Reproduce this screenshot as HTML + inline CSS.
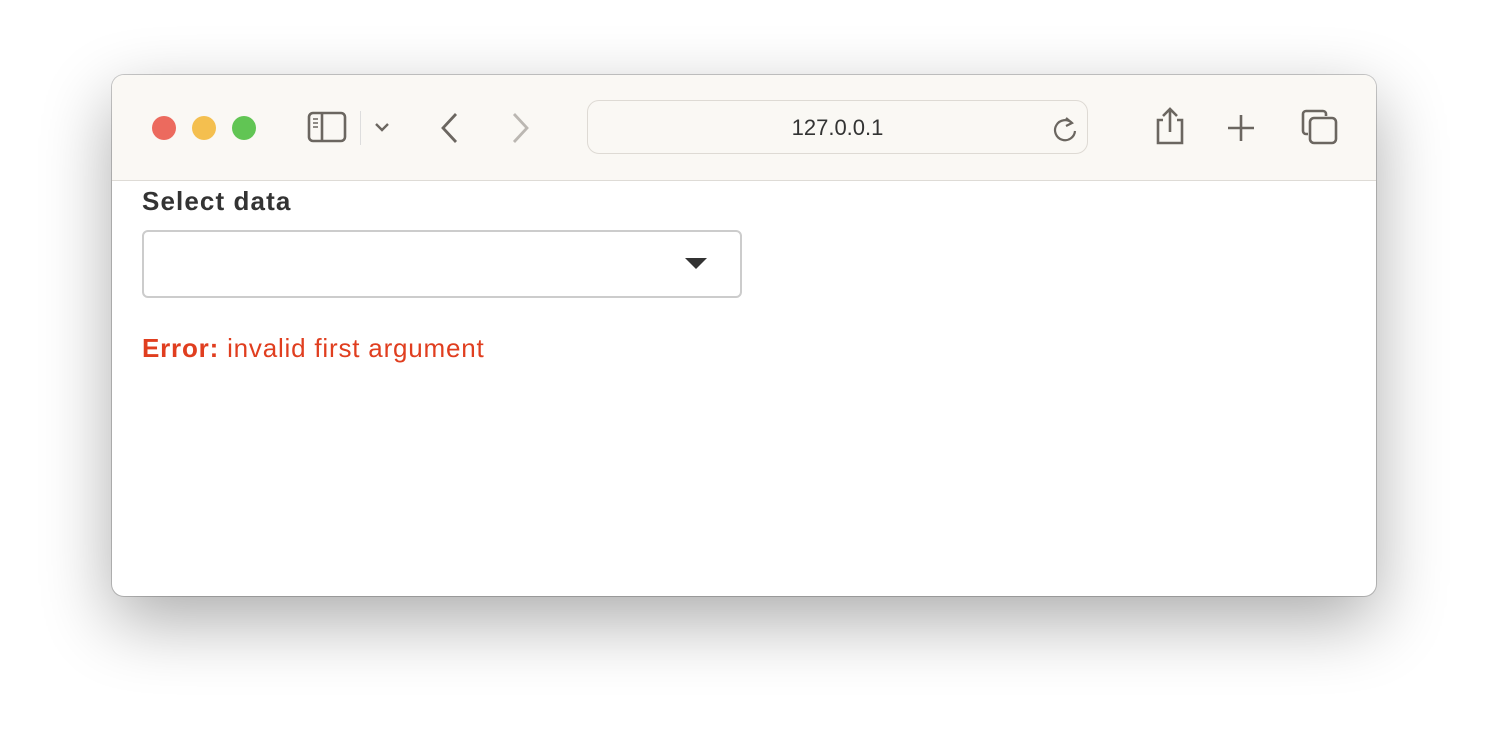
<!DOCTYPE html>
<html><head><style>
body{margin:0;width:1488px;height:744px;background:#fff;position:relative;overflow:hidden;font-family:"Liberation Sans",Arial,sans-serif}
.win{position:absolute;left:112px;top:75px;width:1264px;height:521px;border-radius:12px;background:#fff;box-shadow:0 25px 70px rgba(0,0,0,.33),0 0 0 1px rgba(0,0,0,.2);overflow:hidden}
.bar{position:absolute;left:0;top:0;width:100%;height:105px;background:#faf8f4;border-bottom:1px solid #dedbd6}
.dot{position:absolute;top:41px;width:24px;height:24px;border-radius:50%}
.url{position:absolute;left:475px;top:25px;width:501px;height:54px;border:1.5px solid #dedad4;border-radius:12px;box-sizing:border-box;text-align:center;line-height:54px;font-size:22px;color:#333}
svg{position:absolute}
</style></head><body>
<div class="win">
<div class="bar">
<div class="dot" style="left:40px;background:#ec6a5e"></div>
<div class="dot" style="left:80px;background:#f4bf4f"></div>
<div class="dot" style="left:120px;background:#61c554"></div>
<svg style="left:195px;top:36px" width="40" height="32" viewBox="0 0 40 32" fill="none" stroke="#6b6660" stroke-width="2.6"><rect x="2" y="2" width="36" height="28" rx="4"/><line x1="15" y1="2" x2="15" y2="30"/><path d="M6 8h5M6 12h5M6 16h5" stroke-width="1.6"/></svg>
<div style="position:absolute;left:248px;top:36px;width:1px;height:34px;background:#ddd"></div>
<svg style="left:262px;top:46px" width="16" height="12" viewBox="0 0 16 12" fill="none" stroke="#6b6660" stroke-width="2.4"><path d="M2 3l6 6 6-6"/></svg>
<svg style="left:326px;top:36px" width="24" height="34" viewBox="0 0 24 34" fill="none" stroke="#6b6660" stroke-width="2.8"><path d="M18 3L5 17l13 14"/></svg>
<svg style="left:396px;top:36px" width="24" height="34" viewBox="0 0 24 34" fill="none" stroke="#bbb7b2" stroke-width="2.8"><path d="M6 3l13 14-13 14"/></svg>
<div class="url">127.0.0.1</div>
<svg style="left:940px;top:40px" width="26" height="28" viewBox="0 0 26 28" fill="none" stroke="#6b6660" stroke-width="2.2"><path d="M20 8A10 10 0 1 0 23 16"/><path d="M14 3l6 5-6 3"/></svg>
<svg style="left:1041px;top:31px" width="34" height="40" viewBox="0 0 34 40" fill="none" stroke="#6b6660" stroke-width="2.6"><path d="M10 14H5v23h24V14h-5"/><path d="M17 26V3M10 10l7-7 7 7"/></svg>
<svg style="left:1114px;top:38px" width="30" height="30" viewBox="0 0 30 30" fill="none" stroke="#6b6660" stroke-width="2.6"><path d="M15 2v26M2 15h26"/></svg>
<svg style="left:1189px;top:34px" width="38" height="36" viewBox="0 0 38 36" fill="none" stroke="#6b6660" stroke-width="2.6"><path d="M7 25H5a3 3 0 0 1-3-3V5a3 3 0 0 1 3-3h17a3 3 0 0 1 3 3v2"/><rect x="9" y="9" width="26" height="25" rx="4"/></svg>
</div>
<div style="position:absolute;left:30px;top:111px;font-size:26px;font-weight:bold;color:#333;letter-spacing:1.1px">Select data</div>
<div style="position:absolute;left:30px;top:155px;width:600px;height:68px;border:2px solid #ccc;border-radius:6px;box-sizing:border-box"></div>
<div style="position:absolute;left:573px;top:183px;width:0;height:0;border-left:11px solid transparent;border-right:11px solid transparent;border-top:11px solid #333"></div>
<div style="position:absolute;left:30px;top:258px;font-size:26px;color:#e03e1f;letter-spacing:0.8px"><b>Error:</b> invalid first argument</div>
</div>
</body></html>
